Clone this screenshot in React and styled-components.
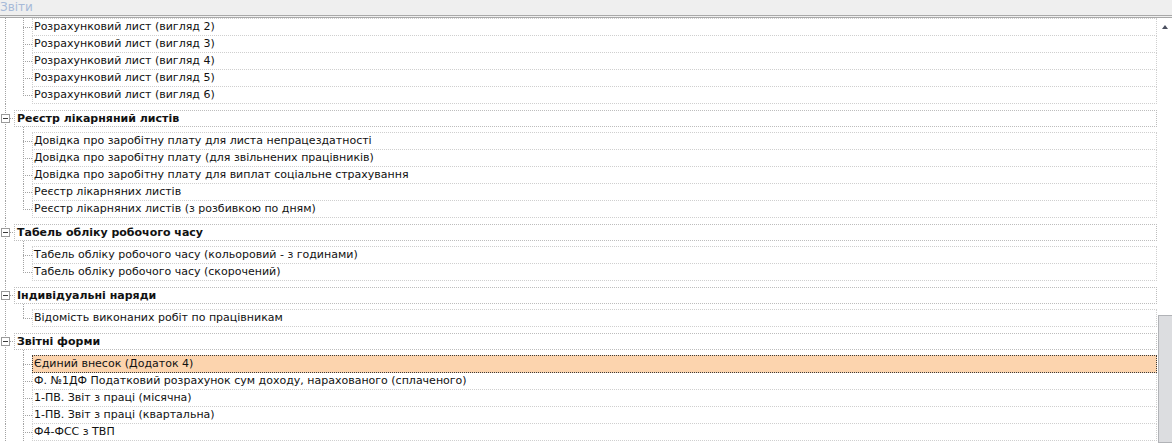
import React from 'react'
import styled, { createGlobalStyle, css } from 'styled-components'

const GlobalStyle = createGlobalStyle`
  html, body {
    margin: 0;
    padding: 0;
    background: #fff;
    overflow: hidden;
  }
  body {
    font-family: "DejaVu Sans", Verdana, sans-serif;
  }
`;

const LINE = '#a3a3a3';
const GRID = '#cfcfcf';

const vLine = (x, size = '100%', pos = '0') =>
  `repeating-linear-gradient(to bottom, ${LINE} 0 1px, transparent 1px 2px) ${x}px ${pos} / 1px ${size} no-repeat`;
const hLine = (x, w) =>
  `repeating-linear-gradient(to right, ${LINE} 0 1px, transparent 1px 2px) ${x}px 50% / ${w}px 1px no-repeat`;

const Window = styled.div`
  width: 1172px;
  height: 443px;
  display: flex;
  flex-direction: column;
  overflow: hidden;
`;

const Header = styled.div`
  height: 15px;
  flex-shrink: 0;
  background: #efefef;
  border-bottom: 3px double #a8a8a8;
  color: #a7bad8;
  font-size: 12px;
  line-height: 14px;
`;

const Body = styled.div`
  flex: 1;
  display: flex;
  overflow: hidden;
`;

const Tree = styled.div`
  width: 1157px;
  flex-shrink: 0;
  display: flex;
  flex-direction: column;
  overflow: hidden;
  font-size: 11px;
  color: #111;
`;

const Rail = styled.div`
  width: 14px;
  flex-shrink: 0;
  display: flex;
  align-items: center;
  background: ${vLine(5)};
`;

const Toggle = styled.div`
  position: relative;
  width: 9px;
  height: 9px;
  box-sizing: border-box;
  margin-left: 1px;
  background: #fff;
  border: 1px solid #9a9a9a;

  &::after {
    content: '';
    position: absolute;
    left: 1px;
    right: 1px;
    top: 3px;
    height: 1px;
    background: #3a3a3a;
  }
`;

const Connector = styled.div`
  flex: 1;
  height: 1px;
  background: ${hLine(0, 4)};
`;

const GroupRow = styled.div`
  display: flex;
  height: 28px;
  flex-shrink: 0;
`;

const LabelCell = styled.div`
  flex: 1;
  padding: 6px 0 5px;
  background: ${vLine(9, '5px', '100%')};
`;

const GroupLabel = styled.div`
  height: 17px;
  box-sizing: border-box;
  border: 1px dotted #bdbdbd;
  padding-left: 2px;
  font-weight: bold;
  line-height: 15px;
  white-space: nowrap;
`;

const ItemRow = styled.div`
  display: flex;
  flex-shrink: 0;
`;

const Branch = styled.div`
  width: 18px;
  flex-shrink: 0;
  background: ${({ $last }) => ($last ? vLine(9, '50%') : vLine(9))},
    ${hLine(9, 9)};
`;

const ItemBox = styled.div`
  flex: 1;
  height: ${({ $first }) => ($first ? 18 : 17)}px;
  box-sizing: border-box;
  border: 1px dotted ${GRID};
  border-top-width: ${({ $first }) => ($first ? 1 : 0)}px;
  padding-left: 1px;
  line-height: 16px;
  white-space: nowrap;

  ${({ $active }) =>
    $active &&
    css`
      background: #fcd4ae;
      border: 1px dotted #3c3c3c;
      line-height: 15px;
    `}
`;

const Scrollbar = styled.div`
  width: 15px;
  flex-shrink: 0;
  display: flex;
  flex-direction: column;
  background: #fff;
`;

const ScrollButton = styled.div`
  height: 22px;
  display: flex;
  align-items: center;
  justify-content: center;

  &::before {
    content: '';
    border-left: 3px solid transparent;
    border-right: 3px solid transparent;
    border-bottom: 4px solid #4b5060;
  }
`;

const Thumb = styled.div`
  margin-top: ${({ $offset }) => $offset}px;
  margin-left: 1px;
  height: 160px;
  box-sizing: border-box;
  background: #dcdde0;
  border: 1px solid #b1b3b7;
  border-right: 0;
`;

const groups = [
  {
    title: null,
    items: [
      'Розрахунковий лист (вигляд 2)',
      'Розрахунковий лист (вигляд 3)',
      'Розрахунковий лист (вигляд 4)',
      'Розрахунковий лист (вигляд 5)',
      'Розрахунковий лист (вигляд 6)',
    ],
  },
  {
    title: 'Реєстр лікарняний листів',
    items: [
      'Довідка про заробітну плату для листа непрацездатності',
      'Довідка про заробітну плату (для звільнених працівників)',
      'Довідка про заробітну плату для виплат соціальне страхування',
      'Реєстр лікарняних листів',
      'Реєстр лікарняних листів (з розбивкою по дням)',
    ],
  },
  {
    title: 'Табель обліку робочого часу',
    items: [
      'Табель обліку робочого часу (кольоровий - з годинами)',
      'Табель обліку робочого часу (скорочений)',
    ],
  },
  {
    title: 'Індивідуальні наряди',
    items: ['Відомість виконаних робіт по працівникам'],
  },
  {
    title: 'Звітні форми',
    more: true,
    items: [
      'Єдиний внесок (Додаток 4)',
      'Ф. №1ДФ Податковий розрахунок сум доходу, нарахованого (сплаченого)',
      '1-ПВ. Звіт з праці (місячна)',
      '1-ПВ. Звіт з праці (квартальна)',
      'Ф4-ФСС з ТВП',
    ],
  },
];

const ACTIVE = 'Єдиний внесок (Додаток 4)';

const Group = ({ group }) => (
  <>
    {group.title && (
      <GroupRow>
        <Rail>
          <Toggle />
          <Connector />
        </Rail>
        <LabelCell>
          <GroupLabel>{group.title}</GroupLabel>
        </LabelCell>
      </GroupRow>
    )}
    {group.items.map((item, i) => (
      <ItemRow key={item}>
        <Rail />
        <Branch $last={!group.more && i === group.items.length - 1} />
        <ItemBox $first={i === 0} $active={item === ACTIVE}>
          {item}
        </ItemBox>
      </ItemRow>
    ))}
  </>
);

export default function App() {
  return (
    <>
      <GlobalStyle />
      <Window>
        <Header>Звіти</Header>
        <Body>
          <Tree>
            {groups.map((g, i) => (
              <Group key={i} group={g} />
            ))}
          </Tree>
          <Scrollbar>
            <ScrollButton />
            <Thumb $offset={280} />
          </Scrollbar>
        </Body>
      </Window>
    </>
  );
}
